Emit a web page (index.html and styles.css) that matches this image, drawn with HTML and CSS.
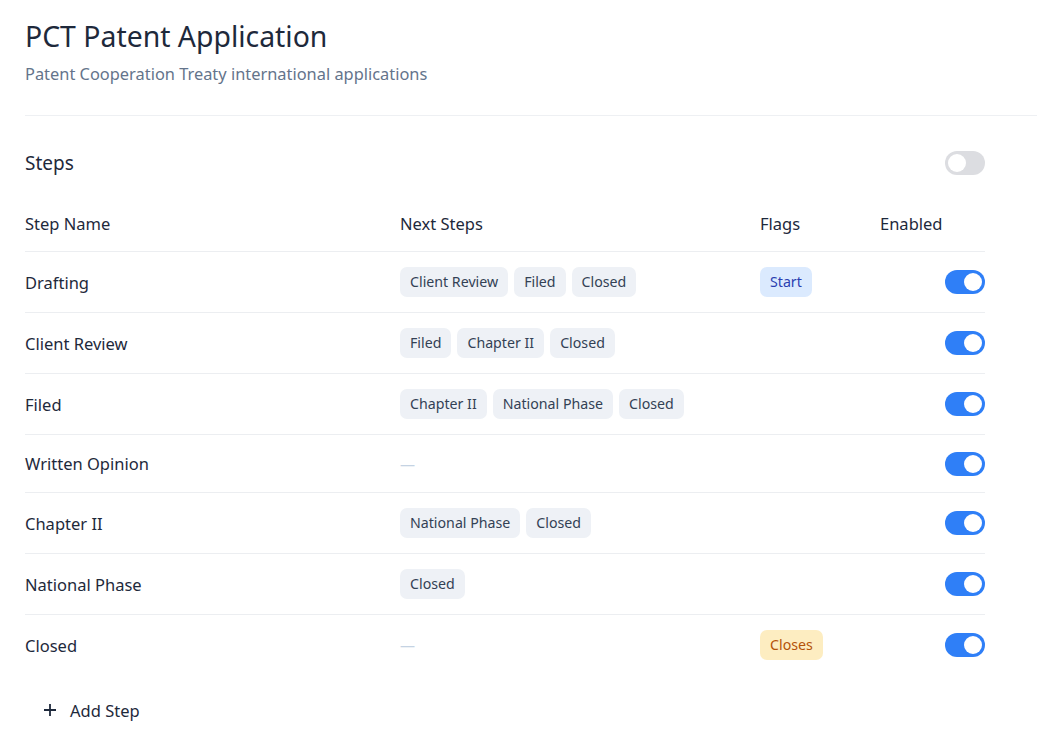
FILE: index.html
```html
<!DOCTYPE html>
<html lang="en">
<head>
    <meta charset="UTF-8">
    <meta name="viewport" content="width=device-width, initial-scale=1.0">
    <title>PCT Patent Application</title>
    <link rel="stylesheet" href="styles.css">
</head>
<body>
    <div class="page">
        <header class="header">
            <h1>PCT Patent Application</h1>
            <p class="subtitle">Patent Cooperation Treaty international applications</p>
        </header>

        <section class="steps">
            <div class="steps-top">
                <h2>Steps</h2>
                <span class="toggle off"></span>
            </div>

            <div class="row head">
                <div>Step Name</div>
                <div>Next Steps</div>
                <div>Flags</div>
                <div>Enabled</div>
            </div>

            <div class="row">
                <div class="name">Drafting</div>
                <div class="chips"><span class="chip">Client Review</span><span class="chip">Filed</span><span class="chip">Closed</span></div>
                <div><span class="flag start">Start</span></div>
                <div class="on-cell"><span class="toggle"></span></div>
            </div>
            <div class="row">
                <div class="name">Client Review</div>
                <div class="chips"><span class="chip">Filed</span><span class="chip">Chapter II</span><span class="chip">Closed</span></div>
                <div></div>
                <div class="on-cell"><span class="toggle"></span></div>
            </div>
            <div class="row">
                <div class="name">Filed</div>
                <div class="chips"><span class="chip">Chapter II</span><span class="chip">National Phase</span><span class="chip">Closed</span></div>
                <div></div>
                <div class="on-cell"><span class="toggle"></span></div>
            </div>
            <div class="row short">
                <div class="name">Written Opinion</div>
                <div class="chips"><span class="none">—</span></div>
                <div></div>
                <div class="on-cell"><span class="toggle"></span></div>
            </div>
            <div class="row">
                <div class="name">Chapter II</div>
                <div class="chips"><span class="chip">National Phase</span><span class="chip">Closed</span></div>
                <div></div>
                <div class="on-cell"><span class="toggle"></span></div>
            </div>
            <div class="row">
                <div class="name">National Phase</div>
                <div class="chips"><span class="chip">Closed</span></div>
                <div></div>
                <div class="on-cell"><span class="toggle"></span></div>
            </div>
            <div class="row last">
                <div class="name">Closed</div>
                <div class="chips"><span class="none">—</span></div>
                <div><span class="flag closes">Closes</span></div>
                <div class="on-cell"><span class="toggle"></span></div>
            </div>

            <button class="add">
                <svg width="14" height="14" viewBox="0 0 14 14"><path d="M7 1v12M1 7h12" stroke="#1e293b" stroke-width="1.8" fill="none"/></svg>
                Add Step
            </button>
        </section>
    </div>
</body>
</html>
```
FILE: styles.css
```css
body {
    font-family: 'Noto Sans', 'Open Sans', sans-serif;
    color: #1e293b;
    background: #ffffff;
    margin: 0;
}
.page {
    padding: 14px 0 0 25px;
}
.header {
    border-bottom: 1px solid #eef0f3;
    padding-bottom: 29px;
}
.header h1 {
    font-size: 28.4px;
    font-weight: 400;
    margin: 0;
    line-height: 44px;
}
.subtitle {
    margin: 4px 0 0;
    font-size: 16.4px;
    color: #64748b;
    line-height: 24px;
}
.steps {
    width: 960px;
}
.steps-top {
    display: flex;
    justify-content: space-between;
    align-items: center;
    height: 94px;
    margin-bottom: 2px;
}
.steps-top h2 {
    font-size: 19px;
    font-weight: 400;
    margin: 0;
}
.row {
    display: grid;
    grid-template-columns: 375px 360px 120px 105px;
    align-items: center;
    height: 60px;
    border-bottom: 1px solid #eceef1;
    font-size: 16.5px;
}
.row.head {
    height: 39px;
    align-items: start;
}
.row.short {
    height: 57px;
}
.row.last {
    border-bottom: none;
}
.chips {
    display: flex;
    gap: 6px;
}
.chip {
    background: #eef1f6;
    color: #334155;
    font-size: 14.2px;
    padding: 0 10px;
    height: 30px;
    line-height: 30px;
    border-radius: 7px;
}
.none {
    color: #c5d3e3;
    font-size: 15px;
}
.flag {
    display: inline-block;
    font-size: 14.2px;
    padding: 0 10px;
    height: 30px;
    line-height: 30px;
    border-radius: 7px;
}
.flag.start {
    background: #dbeafe;
    color: #2a3eb1;
}
.flag.closes {
    background: #fdedc1;
    color: #b45309;
}
.on-cell {
    display: flex;
    justify-content: flex-end;
}
.toggle {
    display: block;
    position: relative;
    width: 40px;
    height: 24px;
    border-radius: 12px;
    background: #2f7ff7;
}
.toggle::after {
    content: "";
    position: absolute;
    top: 3px;
    left: 19px;
    width: 18px;
    height: 18px;
    border-radius: 50%;
    background: #ffffff;
}
.toggle.off {
    background: #dcdde1;
}
.toggle.off::after {
    left: 3px;
}
.add {
    display: flex;
    align-items: center;
    gap: 13px;
    border: none;
    background: none;
    font-family: inherit;
    font-size: 16.5px;
    color: #1e293b;
    padding: 0 0 0 18px;
    margin-top: 20px;
    height: 30px;
}
```
